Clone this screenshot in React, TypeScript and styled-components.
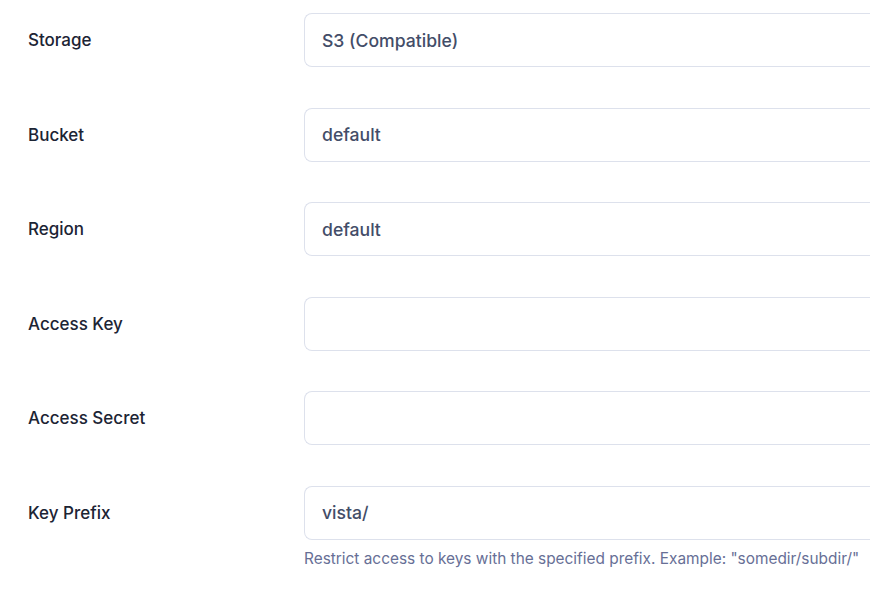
import React from 'react';
import styled, { createGlobalStyle } from 'styled-components';

const GlobalStyle = createGlobalStyle`
    body {
        margin: 0;
        background: #ffffff;
        font-family: Inter, "Noto Sans", sans-serif;
        overflow: hidden;
    }
`;

const Form = styled.div`
    display: flex;
    flex-direction: column;
    gap: 40.6px;
    padding: 13px 0 0 28px;
`;

const Row = styled.div`
    display: grid;
    grid-template-columns: 276px 1fr;
    align-items: start;
`;

const Label = styled.label`
    height: 54px;
    display: flex;
    align-items: center;
    font-size: 17px;
    font-weight: 500;
    color: #1c2434;
`;

const Field = styled.div`
    display: flex;
    flex-direction: column;
    min-width: 0;
`;

// the field runs on past the right edge of the view, so its right side is cut off
const Input = styled.input`
    box-sizing: border-box;
    height: 54px;
    width: 100%;
    padding: 0 17px;
    border: 1px solid #dde1ec;
    border-right: none;
    border-radius: 8px 0 0 8px;
    font-family: Inter, "Noto Sans", sans-serif;
    font-size: 17.6px;
    font-weight: 500;
    color: #434d68;
    background: #fff;
    outline: none;
`;

const Hint = styled.div`
    margin-top: 9px;
    font-size: 15.4px;
    color: #676f96;
    white-space: nowrap;
`;

const fields = [
    { label: 'Storage', value: 'S3 (Compatible)' },
    { label: 'Bucket', value: 'default' },
    { label: 'Region', value: 'default' },
    { label: 'Access Key', value: '' },
    { label: 'Access Secret', value: '' },
    {
        label: 'Key Prefix',
        value: 'vista/',
        hint: 'Restrict access to keys with the specified prefix. Example: "somedir/subdir/"',
    },
];

export default function App() {
    return (
        <>
            <GlobalStyle />
            <Form>
                {fields.map(f => (
                    <Row key={f.label}>
                        <Label>{f.label}</Label>
                        <Field>
                            <Input defaultValue={f.value} readOnly />
                            {f.hint && <Hint>{f.hint}</Hint>}
                        </Field>
                    </Row>
                ))}
            </Form>
        </>
    );
}
